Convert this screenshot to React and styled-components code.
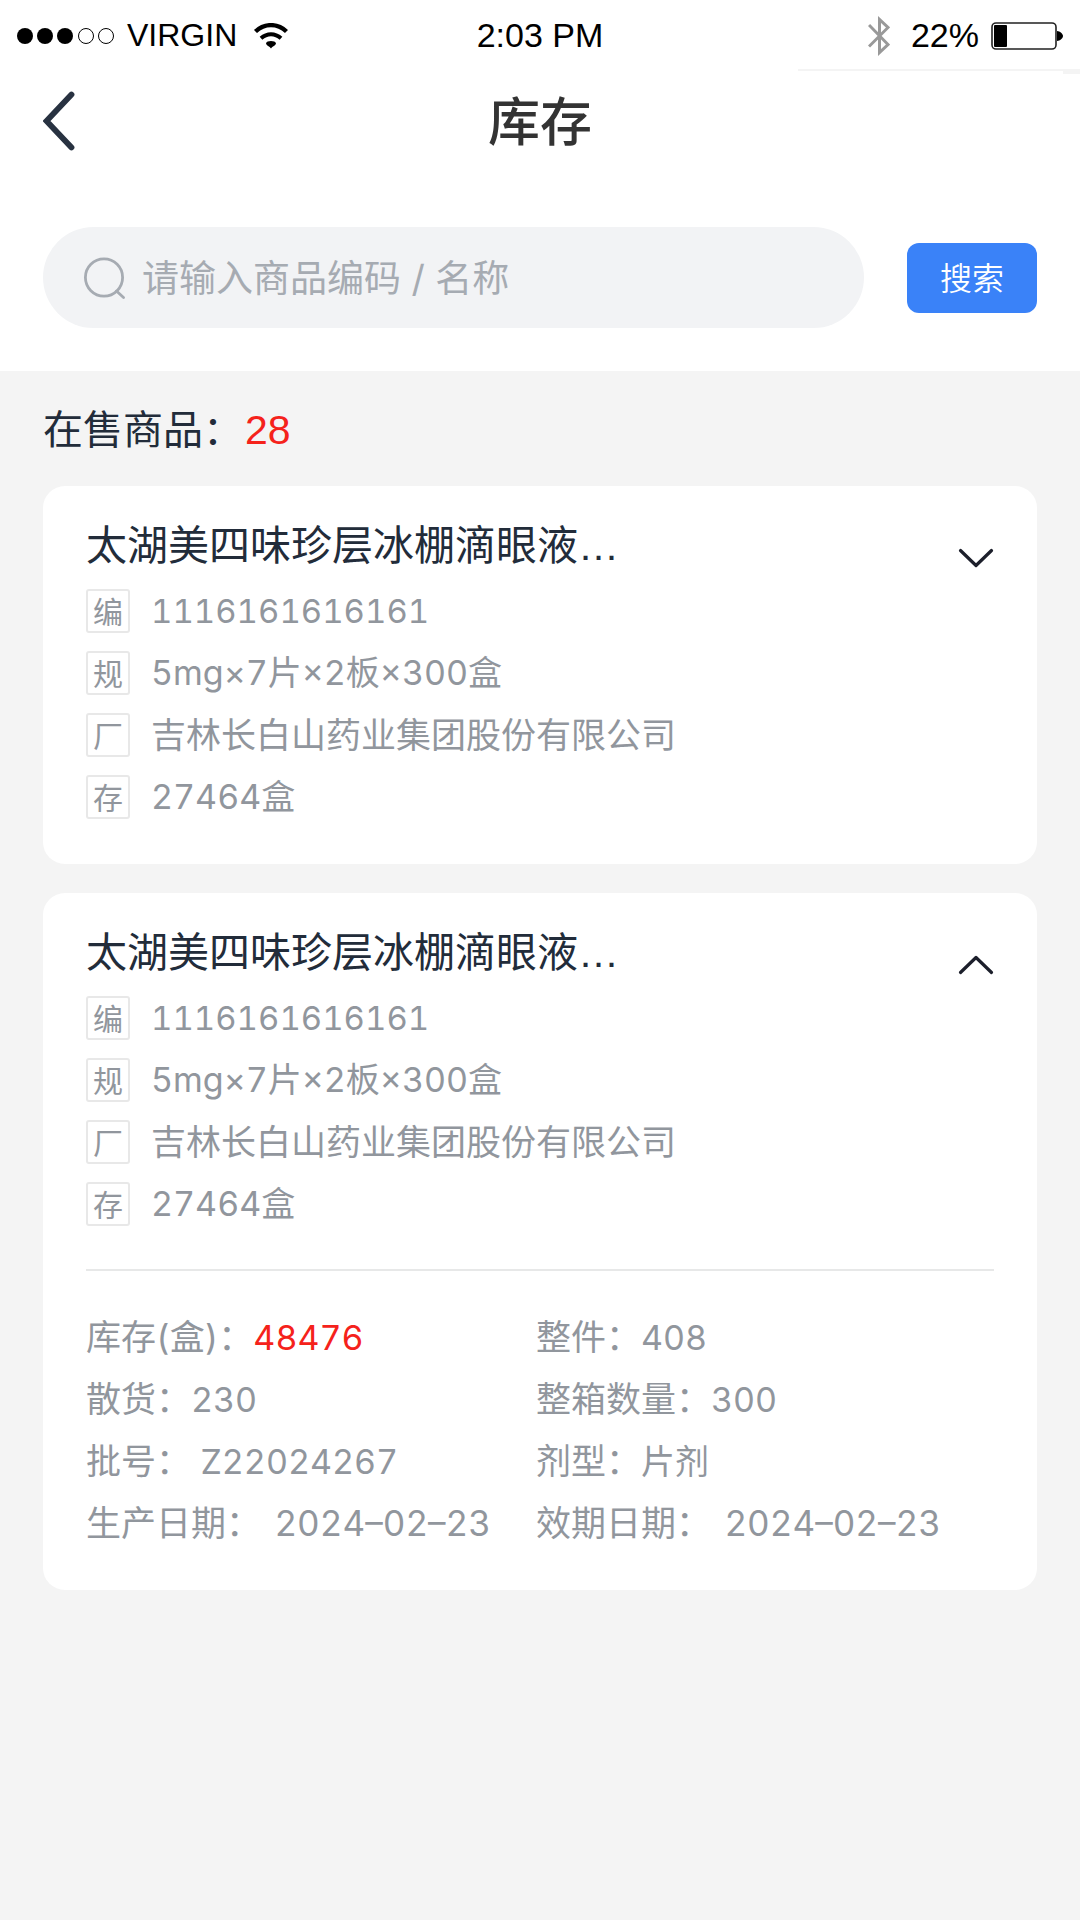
import { useState } from "react";
import styled, { createGlobalStyle } from "styled-components";

const PRODUCTS = [
  {
    id: 1,
    name: "太湖美四味珍层冰棚滴眼液…",
    code: "1116161616161",
    spec: "5mg×7片×2板×300盒",
    factory: "吉林长白山药业集团股份有限公司",
    stock: "27464盒",
  },
  {
    id: 2,
    name: "太湖美四味珍层冰棚滴眼液…",
    code: "1116161616161",
    spec: "5mg×7片×2板×300盒",
    factory: "吉林长白山药业集团股份有限公司",
    stock: "27464盒",
  },
];

const DETAILS = [
  { label: "库存(盒)：", value: "48476", highlight: true },
  { label: "整件：", value: "408" },
  { label: "散货：", value: "230" },
  { label: "整箱数量：", value: "300" },
  { label: "批号： ", value: "Z22024267" },
  { label: "剂型：", value: "片剂" },
  { label: "生产日期： ", date: "2024–02–23" },
  { label: "效期日期： ", date: "2024–02–23" },
];

function StatusBar() {
  return (
    <Status>
      <StatusGroup>
        <svg width="98" height="18" viewBox="0 0 98 18" aria-hidden="true">
          <circle cx="8" cy="9" r="8" />
          <circle cx="28" cy="9" r="8" />
          <circle cx="48" cy="9" r="8" />
          <circle cx="69" cy="9" r="7.5" fill="none" stroke="#000" />
          <circle cx="89" cy="9" r="7.5" fill="none" stroke="#000" />
        </svg>
        <Carrier>VIRGIN</Carrier>
        <svg width="34" height="26" viewBox="0 0 34 26" aria-hidden="true">
          <path
            d="M1.5 8.5C10.5 0 23.5 0 32.5 8.5"
            fill="none"
            stroke="#000"
            strokeWidth="4.4"
          />
          <path
            d="M7 15.2C13 9.8 21 9.8 27 15.2"
            fill="none"
            stroke="#000"
            strokeWidth="4"
          />
          <path d="M12 20.4C12.6 17.2 21.4 17.2 22 20.4C21.6 22.6 18.4 23 17 25.5C15.6 23 12.4 22.6 12 20.4Z" />
        </svg>
      </StatusGroup>
      <span>2:03 PM</span>
      <StatusGroup $end>
        <svg width="22" height="40" viewBox="0 0 22 40" aria-hidden="true">
          <path
            d="M1 9L20 28.5L11.5 36.5V3.5L20 11.5L1 30.5"
            fill="none"
            stroke="#999"
            strokeWidth="3"
          />
        </svg>
        <Percent>22%</Percent>
        <svg width="72" height="28" viewBox="0 0 72 28" aria-hidden="true">
          <rect
            x="1"
            y="1"
            width="64"
            height="26"
            rx="4"
            fill="none"
            stroke="#222"
            strokeWidth="1.6"
          />
          <rect x="3" y="3" width="13" height="22" rx="1" />
          <path d="M66 9C69 9 72 12 72 14C72 16 69 19 66 19Z" />
        </svg>
      </StatusGroup>
    </Status>
  );
}

function ProductCard({ product, defaultOpen }) {
  const [open, setOpen] = useState(defaultOpen);

  return (
    <Card>
      <Summary>
        <Info>
          <ProductName>{product.name}</ProductName>
          <InfoRow $size={33}>
            <Tag>编</Tag>
            {product.code}
          </InfoRow>
          <InfoRow $size={34}>
            <Tag>规</Tag>
            {product.spec}
          </InfoRow>
          <InfoRow $size={35}>
            <Tag>厂</Tag>
            {product.factory}
          </InfoRow>
          <InfoRow $size={34}>
            <Tag>存</Tag>
            {product.stock}
          </InfoRow>
        </Info>
        <Toggle
          type="button"
          aria-label={open ? "收起" : "展开"}
          aria-expanded={open}
          onClick={() => setOpen(!open)}
        >
          <svg width="36" height="20" viewBox="0 0 36 20" aria-hidden="true">
            <path
              d={open ? "M2.5 17.5L18 2.5L33.5 17.5" : "M2.5 2.5L18 17.5L33.5 2.5"}
              fill="none"
              stroke="#1c1f2b"
              strokeWidth="3.2"
              strokeLinecap="round"
              strokeLinejoin="round"
            />
          </svg>
        </Toggle>
      </Summary>
      {open && (
        <Details>
          {DETAILS.map((item) => (
            <Detail key={item.label}>
              {item.label}
              {item.date ? (
                <DateValue>{item.date}</DateValue>
              ) : (
                <Value $highlight={item.highlight}>{item.value}</Value>
              )}
            </Detail>
          ))}
        </Details>
      )}
    </Card>
  );
}

function App() {
  const [keyword, setKeyword] = useState("");

  return (
    <>
      <GlobalStyle />
      <Header>
        <StatusBar />
        <StatusEdge />
        <NavBar>
          <BackButton type="button" aria-label="返回">
            <svg width="32" height="60" viewBox="0 0 32 60" aria-hidden="true">
              <path
                d="M28.5 3.5L3.5 30L28.5 56.5"
                fill="none"
                stroke="#283241"
                strokeWidth="5.8"
                strokeLinecap="round"
              />
            </svg>
          </BackButton>
          <Title>库存</Title>
        </NavBar>
        <SearchBar onSubmit={(e) => e.preventDefault()}>
          <SearchBox>
            <svg width="42" height="42" viewBox="0 0 42 42" aria-hidden="true">
              <g fill="none" stroke="#a6abb2" strokeWidth="2.8">
                <circle cx="20" cy="20.5" r="18.6" />
                <path d="M32.5 34L39.5 40.5" strokeLinecap="round" />
              </g>
            </svg>
            <SearchInput
              aria-label="商品编码 / 名称"
              value={keyword}
              onChange={(e) => setKeyword(e.target.value)}
              placeholder="请输入商品编码 / 名称"
            />
          </SearchBox>
          <SearchButton type="submit">搜索</SearchButton>
        </SearchBar>
      </Header>
      <Main>
        <Count>
          在售商品：<CountNumber>28</CountNumber>
        </Count>
        <List>
          {PRODUCTS.map((product) => (
            <ProductCard
              key={product.id}
              product={product}
              defaultOpen={product.id === 2}
            />
          ))}
        </List>
      </Main>
    </>
  );
}

const GlobalStyle = createGlobalStyle`
  * {
    box-sizing: border-box;
  }

  body {
    margin: 0;
    background: #f4f4f4;
    color: #222c3a;
    font-family: "Liberation Sans", "Noto Sans CJK SC", sans-serif;
  }

  svg {
    display: block;
    flex-shrink: 0;
  }
`;

const Header = styled.header`
  background: #fff;
`;

const Status = styled.div`
  display: grid;
  grid-template-columns: 1fr auto 1fr;
  align-items: center;
  height: 69px;
  padding: 2px 17px 0;
  font-size: 34px;
  color: #000;
`;

const StatusGroup = styled.div`
  display: flex;
  align-items: center;
  justify-content: ${({ $end }) => ($end ? "flex-end" : "flex-start")};
`;

const Carrier = styled.span`
  margin: 0 17px 0 12px;
  font-size: 32px;
`;

const Percent = styled.span`
  margin: 0 12px 0 21px;
`;

const StatusEdge = styled.div`
  width: 282px;
  height: 5px;
  margin-left: auto;
  border-top: 2px solid #f4f4f4;

  &::after {
    content: "";
    display: block;
    width: 17px;
    height: 3px;
    margin-left: auto;
    background: #f4f4f4;
  }
`;

const NavBar = styled.div`
  display: grid;
  grid-template-columns: 1fr auto 1fr;
  align-items: center;
  height: 94px;
  padding: 0 43px;
`;

const BackButton = styled.button`
  justify-self: start;
  padding: 0;
  border: none;
  background: none;
  cursor: pointer;
`;

const Title = styled.h1`
  margin: 0;
  padding-top: 4px;
  font-size: 52px;
  line-height: 90px;
  font-weight: 500;
  color: #333;
`;

const SearchBar = styled.form`
  display: flex;
  align-items: center;
  gap: 43px;
  padding: 59px 43px 43px;
`;

const SearchBox = styled.label`
  flex: 1;
  display: flex;
  align-items: center;
  gap: 16px;
  height: 101px;
  padding: 0 41px;
  border-radius: 51px;
  background: #f2f3f5;
`;

const SearchInput = styled.input`
  flex: 1;
  min-width: 0;
  padding: 2px 0 0;
  border: none;
  outline: none;
  background: none;
  font-family: Inter, "Noto Sans CJK SC", sans-serif;
  font-size: 37px;
  color: #222c3a;

  &::placeholder {
    color: #a6abb2;
    opacity: 1;
  }
`;

const SearchButton = styled.button`
  width: 130px;
  height: 70px;
  padding: 0 0 4px;
  border: none;
  border-radius: 12px;
  background: #3a82f8;
  color: #fff;
  font-family: inherit;
  font-size: 32px;
  font-weight: 350;
  cursor: pointer;
`;

const Main = styled.main`
  padding: 0 43px 43px;
`;

const Count = styled.p`
  margin: 0;
  padding-top: 3px;
  font-size: 40px;
  line-height: 112px;
`;

const CountNumber = styled.span`
  margin-left: 2px;
  font-size: 41px;
  color: #f5221b;
`;

const List = styled.div`
  display: flex;
  flex-direction: column;
  gap: 29px;
`;

const Card = styled.section`
  padding: 28px 43px 36px;
  border-radius: 22px;
  background: #fff;
`;

const Summary = styled.div`
  display: flex;
  align-items: flex-start;
`;

const Info = styled.div`
  flex: 1;
  min-width: 0;
`;

const ProductName = styled.h2`
  margin: 0 0 2px;
  font-size: 41px;
  line-height: 64px;
  font-weight: 400;
`;

const InfoRow = styled.div`
  display: flex;
  align-items: center;
  gap: 21px;
  font-family: Inter, "Noto Sans CJK SC", sans-serif;
  font-size: ${({ $size }) => $size}px;
  line-height: 62px;
  font-variant-numeric: tabular-nums;
  color: #91969d;
`;

const Tag = styled.span`
  width: 44px;
  height: 44px;
  border: 2px solid #e8e8e8;
  border-radius: 3px;
  font-size: 30px;
  line-height: 42px;
  text-align: center;
`;

const Toggle = styled.button`
  height: 60px;
  margin-top: 14px;
  padding: 0;
  border: none;
  background: none;
  cursor: pointer;
`;

const Details = styled.div`
  display: grid;
  grid-template-columns: max-content 1fr;
  grid-auto-rows: 62px;
  column-gap: 45px;
  margin-top: 34px;
  padding-top: 35px;
  border-top: 2px solid #e7e8e8;
`;

const Detail = styled.div`
  font-family: Inter, "Noto Sans CJK SC", sans-serif;
  font-size: 35px;
  line-height: 62px;
  font-variant-numeric: tabular-nums;
  white-space: pre;
  color: #91969d;
`;

const Value = styled.span`
  font-size: 34px;
  color: ${({ $highlight }) => ($highlight ? "#f5221b" : "inherit")};
`;

const DateValue = styled.time`
  margin-left: 4px;
`;

export default App;
